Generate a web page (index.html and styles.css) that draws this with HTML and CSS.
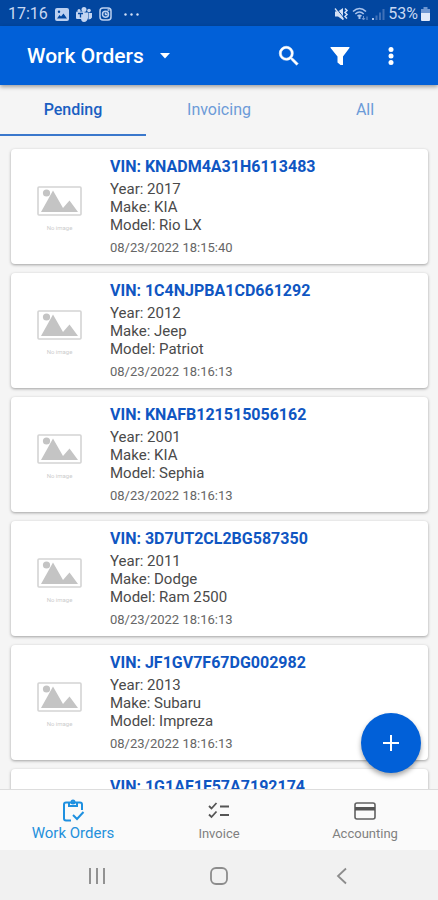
FILE: index.html
```html
<!DOCTYPE html>
<html lang="en">
<head>
  <meta charset="UTF-8"/>
  <meta name="viewport" content="width=device-width, initial-scale=1.0"/>
  <title>Work Orders</title>
  <link rel="stylesheet" href="styles.css">
</head>
<body>

  <!-- Shared placeholder picture -->
  <svg class="sprite" aria-hidden="true">
    <symbol id="no-image" viewBox="0 0 46 48">
      <rect x="1" y="1" width="43" height="28" rx="1" fill="none" stroke="#d4d4d4" stroke-width="1.6"/>
      <circle cx="9.500" cy="7" r="3.600" fill="#c4c4c4"/>
      <path d="M4 26 16 4.500l10 17.500 6.500-7.500L41 26z" fill="#c4c4c4"/>
      <text x="22.500" y="44" class="no-image-text">No image</text>
    </symbol>
  </svg>

  <div class="status-bar">
    <div class="status-left">
      <span>17:16</span>
      <svg width="14" height="13" viewBox="0 0 14 13"><path fill="#bcd0f0" fill-rule="evenodd" d="M2 0h10q2 0 2 2v9q0 2-2 2H2q-2 0-2-2V2q0-2 2-2zM2 10.500h10L8.500 5.500 6 8.500 4.500 7z"/><circle cx="4" cy="3.800" r="1.200" fill="#02469f"/></svg>
      <svg width="16" height="15" viewBox="0 0 16 15"><g fill="#c3d5f2"><circle cx="8" cy="2.600" r="2.500"/><circle cx="13" cy="3.600" r="1.800"/><circle cx="3" cy="3.600" r="1.500"/><path d="M5 5.500h7V11q-1 4-4 4t-3-4zM12.500 6H16v4.500q-1 2-3.500 2z"/><rect y="4.500" width="8.500" height="7.500" rx="1"/></g><path d="M2 6.500h5M4.500 6.500v4" stroke="#02469f" stroke-width="1.300"/></svg>
      <svg width="13" height="14" viewBox="0 0 13 14" fill="none" stroke="#bcd0f0" stroke-width="1.500"><rect x="1" y="1" width="11" height="12" rx="3"/><circle cx="6.500" cy="7.300" r="3"/><path d="M6.500 5.500v2h2M8.500 3h2"/></svg>
      <svg class="status-dots" width="15" height="3" viewBox="0 0 15 3" fill="#d3e0f5"><circle cx="1.500" cy="1.500" r="1.200"/><circle cx="7.500" cy="1.500" r="1.200"/><circle cx="13.500" cy="1.500" r="1.200"/></svg>
    </div>
    <div class="status-right">
      <svg width="15" height="14" viewBox="0 0 15 14"><path fill="#d3e0f5" d="M1 4.500h3L9 1v12L4 9.500H1z"/><path d="M2 1l8 10" stroke="#02469f"/><path d="M1 1.500l8.500 11" stroke="#d3e0f5" stroke-width="1.300"/><path d="M11 1.500l2 2-2 2 2 2-2 2 2 2" fill="none" stroke="#d3e0f5" stroke-width="1.500"/></svg>
      <svg width="17" height="14" viewBox="0 0 17 14" fill="none" stroke="#a9c3ec" stroke-width="1.600"><path d="M1 4.500q6.500-6 13 0M3.300 7q4.200-4 8.400 0M5.500 9.300q2-2 4 0"/><path d="M7.500 9v3" stroke-width="2"/><path d="M11.500 9v3.500M10 11l1.500 2 1.500-2M15 13V9.500" stroke-width="1" stroke="#6f97d2"/></svg>
      <svg width="13" height="14" viewBox="0 0 13 14"><path fill="#a9c3ec" d="M0 11h2v2H0z"/><path fill="#3f70b8" d="M3.500 8.500h2V13h-2zM7 5.500h2V13H7zM10.500 2h2v11h-2z"/></svg>
      <span>53%</span>
      <svg width="9" height="14" viewBox="0 0 9 14"><path fill="#6f97d2" d="M2.500 0h4v2H9v5H0V2h2.500z"/><path fill="#e1eafa" d="M0 6h9v7q0 1-1 1H1q-1 0-1-1z"/></svg>
    </div>
  </div>

  <header>
    <button class="title-btn">
      <h1>Work Orders</h1>
      <svg width="10" height="6" viewBox="0 0 10 6"><path d="M0 0h10L5 5.500z" fill="#fff"/></svg>
    </button>
    <div class="actions">
      <button aria-label="Search">
        <svg width="26" height="26" viewBox="0 0 24 24"><path fill="#fff" stroke="#fff" stroke-width=".5" d="M15.500 14h-.79l-.28-.27A6.470 6.470 0 0 0 16 9.500 6.500 6.500 0 1 0 9.500 16c1.610 0 3.090-.59 4.230-1.570l.27.28v.79l5 4.990L20.490 19l-4.990-5zm-6 0C7.010 14 5 11.990 5 9.500S7.010 5 9.500 5 14 7.010 14 9.500 11.990 14 9.500 14z"/></svg>
      </button>
      <button aria-label="Filter">
        <svg width="26" height="26" viewBox="0 0 26 26"><path fill="#fff" d="M4 4h18q1 0 .4 1L16 13.500V22h-2.500L10.500 19.500v-6L3.600 5Q3 4 4 4z"/></svg>
      </button>
      <button aria-label="More">
        <svg width="26" height="26" viewBox="0 0 26 26" fill="#fff"><circle cx="13" cy="6.500" r="2.500"/><circle cx="13" cy="13" r="2.500"/><circle cx="13" cy="19.500" r="2.500"/></svg>
      </button>
    </div>
  </header>

  <nav class="tabs">
    <a href="#pending" class="active">Pending</a>
    <a href="#invoicing">Invoicing</a>
    <a href="#all">All</a>
  </nav>

  <main>
    <div class="cards">
      <article class="card">
        <div class="thumb"><svg width="46" height="48"><use href="#no-image"/></svg></div>
        <div class="info">
          <h2>VIN: KNADM4A31H6113483</h2>
          <p>Year: 2017</p>
          <p>Make: KIA</p>
          <p>Model: Rio LX</p>
          <time>08/23/2022 18:15:40</time>
        </div>
      </article>
      <article class="card">
        <div class="thumb"><svg width="46" height="48"><use href="#no-image"/></svg></div>
        <div class="info">
          <h2>VIN: 1C4NJPBA1CD661292</h2>
          <p>Year: 2012</p>
          <p>Make: Jeep</p>
          <p>Model: Patriot</p>
          <time>08/23/2022 18:16:13</time>
        </div>
      </article>
      <article class="card">
        <div class="thumb"><svg width="46" height="48"><use href="#no-image"/></svg></div>
        <div class="info">
          <h2>VIN: KNAFB121515056162</h2>
          <p>Year: 2001</p>
          <p>Make: KIA</p>
          <p>Model: Sephia</p>
          <time>08/23/2022 18:16:13</time>
        </div>
      </article>
      <article class="card">
        <div class="thumb"><svg width="46" height="48"><use href="#no-image"/></svg></div>
        <div class="info">
          <h2>VIN: 3D7UT2CL2BG587350</h2>
          <p>Year: 2011</p>
          <p>Make: Dodge</p>
          <p>Model: Ram 2500</p>
          <time>08/23/2022 18:16:13</time>
        </div>
      </article>
      <article class="card">
        <div class="thumb"><svg width="46" height="48"><use href="#no-image"/></svg></div>
        <div class="info">
          <h2>VIN: JF1GV7F67DG002982</h2>
          <p>Year: 2013</p>
          <p>Make: Subaru</p>
          <p>Model: Impreza</p>
          <time>08/23/2022 18:16:13</time>
        </div>
      </article>
      <article class="card">
        <div class="thumb"></div>
        <div class="info">
          <h2>VIN: 1G1AF1F57A7192174</h2>
        </div>
      </article>
    </div>
    <button class="add-btn" aria-label="Add work order">
      <svg width="16" height="16" viewBox="0 0 16 16"><path d="M8 0v16M0 8h16" stroke="#fff" stroke-width="2"/></svg>
    </button>
  </main>

  <nav class="bottom-nav">
    <a href="#work-orders" class="active">
      <svg width="24" height="24" viewBox="0 0 24 24" fill="none" stroke="#1e90e0" stroke-width="2"><path d="M10 21.500H5q-2 0-2-2V5.500q0-2 2-2h14q2 0 2 2V11"/><path d="M8 4v3h8V4"/><circle cx="12" cy="3" r="1.500"/><path d="M12 16l4 4 6.500-7"/></svg>
      <span>Work Orders</span>
    </a>
    <a href="#invoice">
      <svg width="24" height="24" viewBox="0 0 24 24" fill="none" stroke="#555" stroke-width="1.800"><path d="M2 7l2.500 2.500L9.500 4M2 15.500L4.500 18l5-5.500M13 7.500h9M13 16h9"/></svg>
      <span>Invoice</span>
    </a>
    <a href="#accounting">
      <svg width="24" height="24" viewBox="0 0 24 24"><rect x="2" y="4" width="20" height="16" rx="2" fill="none" stroke="#616161" stroke-width="1.600"/><path d="M2 8h20v3.500H2z" fill="#555"/></svg>
      <span>Accounting</span>
    </a>
  </nav>

  <div class="system-nav">
    <button aria-label="Recent apps">
      <svg width="18" height="18" viewBox="0 0 18 18"><path d="M2 1v16M9 1v16M16 1v16" stroke="#929292" stroke-width="2"/></svg>
    </button>
    <button aria-label="Home">
      <svg width="18" height="18" viewBox="0 0 18 18"><rect x="1" y="1" width="16" height="16" rx="5" fill="none" stroke="#8c8c8c" stroke-width="1.800"/></svg>
    </button>
    <button aria-label="Back">
      <svg width="18" height="18" viewBox="0 0 18 18"><path d="M14 1.500L6 9l8 7.500" fill="none" stroke="#8c8c8c" stroke-width="1.800"/></svg>
    </button>
  </div>

</body>
</html>
```
FILE: styles.css
```css
* {
  margin: 0;
  padding: 0;
  box-sizing: border-box;
  font-family: Roboto, sans-serif;
}

body {
  display: flex;
  flex-direction: column;
  height: 100vh;
  background: #f5f5f5;
  color: #4a4a4a;
  overflow: hidden;
}

svg {
  display: block;
}

button {
  border: none;
  background: none;
  cursor: pointer;
}

a {
  text-decoration: none;
}

.sprite {
  position: absolute;
  width: 0;
  height: 0;
}

/* Status bar */
.status-bar {
  display: flex;
  justify-content: space-between;
  align-items: center;
  height: 26px;
  padding: 2px 8px 0;
  background: #02469f;
  color: #c8d8f2;
  font-size: 16px;
  line-height: 24px;
}

.status-left,
.status-right {
  display: flex;
  align-items: center;
}

.status-left {
  gap: 7px;
}

.status-right {
  gap: 3px;
}

.status-dots {
  margin-left: 5px;
}

/* App bar */
header {
  display: flex;
  justify-content: space-between;
  align-items: center;
  height: 59px;
  padding: 0 34px 0 27px;
  background: #0160d8;
  box-shadow: 0 2px 4px rgba(0, 0, 0, 0.35);
  z-index: 2;
}

.title-btn {
  display: flex;
  align-items: center;
  gap: 16px;
  color: #fff;
}

.title-btn h1 {
  font-size: 21px;
  font-weight: 500;
}

.actions {
  display: flex;
  gap: 25px;
}

/* Tabs */
.tabs {
  display: flex;
  height: 51px;
}

.tabs a {
  flex: 1;
  border-bottom: 2px solid transparent;
  color: #6c9bd8;
  font-size: 16px;
  line-height: 50px;
  text-align: center;
}

.tabs a.active {
  border-color: #3a78cc;
  color: #1a60c2;
  font-weight: 500;
}

/* Work order list */
main {
  position: relative;
  flex: 1;
  min-height: 0;
}

.cards {
  display: flex;
  flex-direction: column;
  gap: 9px;
  height: 100%;
  padding: 13px 10px 0 11px;
  overflow: hidden;
}

.card {
  display: flex;
  flex: none;
  background: #fff;
  border-radius: 4px;
  min-height: 115px;
  box-shadow: 0 1px 3px rgba(0, 0, 0, 0.35);
}

.thumb {
  display: flex;
  justify-content: center;
  align-items: center;
  width: 99px;
  padding: 6px 2px 0 0;
}

.no-image-text {
  font-size: 6px;
  fill: #ccc;
  text-anchor: middle;
}

.info {
  padding: 8px 0 0;
}

.info h2 {
  margin-bottom: 3px;
  color: #0f56c2;
  font-size: 16px;
  font-weight: 700;
  line-height: 20px;
}

.info p {
  font-size: 15px;
  line-height: 18px;
}

.info time {
  display: block;
  margin-top: 5px;
  color: #666;
  font-size: 13px;
  line-height: 18px;
}

.add-btn {
  position: absolute;
  right: 17px;
  bottom: 16px;
  display: flex;
  justify-content: center;
  align-items: center;
  width: 60px;
  height: 60px;
  border-radius: 50%;
  background: #0160d8;
  box-shadow: 0 3px 5px rgba(0, 0, 0, 0.35);
}

/* Bottom navigation */
.bottom-nav {
  display: flex;
  height: 61px;
  border-top: 1px solid #ddd;
  background: #fafafa;
}

.bottom-nav a {
  display: flex;
  flex: 1;
  flex-direction: column;
  align-items: center;
  padding-top: 9px;
  color: #808080;
  font-size: 13px;
  line-height: 21px;
}

.bottom-nav a.active {
  color: #2490dc;
  font-size: 15px;
}

/* Android navigation */
.system-nav {
  display: flex;
  justify-content: space-around;
  align-items: center;
  height: 50px;
  padding: 2px 36px 0;
  background: #f1f1f1;
}
```
